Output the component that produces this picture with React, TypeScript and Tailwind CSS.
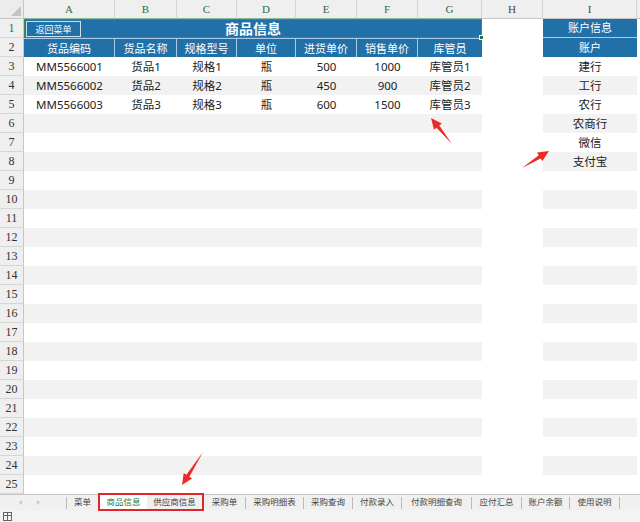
import React from "react";

const cols = ["A", "B", "C", "D", "E", "F", "G", "H", "I"];
const headers = ["货品编码", "货品名称", "规格型号", "单位", "进货单价", "销售单价", "库管员"];
const data = [
  ["MM5566001", "货品1", "规格1", "瓶", "500", "1000", "库管员1"],
  ["MM5566002", "货品2", "规格2", "瓶", "450", "900", "库管员2"],
  ["MM5566003", "货品3", "规格3", "瓶", "600", "1500", "库管员3"],
];
const accounts = ["建行", "工行", "农行", "农商行", "微信", "支付宝"];

function arrowPoints(tx: number, ty: number, hx: number, hy: number) {
  const dx = hx - tx;
  const dy = hy - ty;
  const len = Math.hypot(dx, dy);
  const ux = dx / len;
  const uy = dy / len;
  const px = -uy;
  const py = ux;
  const hl = 11;
  const hw = 5;
  const sw = 1.8;
  const bx = hx - ux * hl;
  const by = hy - uy * hl;
  const pts = [
    [tx, ty],
    [bx + px * sw, by + py * sw],
    [bx + px * hw, by + py * hw],
    [hx, hy],
    [bx - px * hw, by - py * hw],
    [bx - px * sw, by - py * sw],
  ];
  return pts.map((p) => p.map((v) => v.toFixed(1)).join(",")).join(" ");
}

const font = "font-['Noto_Sans','Noto_Sans_CJK_SC',sans-serif]";
const serif = "font-['Liberation_Serif','DejaVu_Serif',serif]";

function Sep() {
  return <div className="w-px h-[12px] bg-[#b9b9b9]" />;
}

function Tab({ label, w, active }: { label: string; w: number; active?: boolean }) {
  return (
    <div
      className={`flex items-center justify-center h-full text-[8.5px] ${
        active ? "bg-white text-[#1e7b45]" : "text-[#444]"
      }`}
      style={{ width: w }}
    >
      {label}
    </div>
  );
}

export default function App() {
  const rows = Array.from({ length: 25 }, (_, i) => i + 1);
  return (
    <div className={`relative w-[640px] h-[522px] overflow-hidden bg-white ${font}`}>
      <div className="grid grid-cols-[24px_91px_62px_60px_59px_61px_61px_64px_61px_94px_3px] grid-rows-[19px_repeat(25,19px)] h-[494px]">
        {/* corner */}
        <div className="bg-[#ececec] border-r border-b border-[#c6c6c6] relative">
          <svg className="absolute right-[2px] bottom-[2px]" width="10" height="10" viewBox="0 0 10 10">
            <polygon points="10,0 10,10 0,10" fill="#c4c4c4" />
          </svg>
        </div>
        {cols.map((c, i) => (
          <div
            key={c}
            className={`bg-[#efefef] border-r border-[#d4d4d4] flex items-center justify-center text-[11px] ${serif} ${
              i < 7 ? "text-[#2f6b3f] border-b border-b-[#8fb79a]" : "text-[#444] border-b border-b-[#c6c6c6]"
            }`}
          >
            {c}
          </div>
        ))}
        <div className="bg-[#efefef] border-b border-[#c6c6c6]" />

        {rows.map((r) => {
          const stripe = r >= 3 && r % 2 === 0 ? "bg-[#f2f2f2]" : "bg-white";
          const num = (
            <div
              key={`n${r}`}
              className={`bg-[#efefef] border-r border-b border-r-[#c6c6c6] border-b-[#d6d6d6] flex items-center justify-center text-[12px] ${serif} ${
                r === 1 ? "text-[#2f6b3f]" : "text-[#333]"
              }`}
            >
              {r}
            </div>
          );
          if (r === 1) {
            return (
              <React.Fragment key={r}>
                {num}
                <div className="col-span-7 relative bg-[#2270a8] border border-[#3f8a55] flex items-center justify-center text-white text-[14px] font-bold leading-none">
                  <div className="absolute left-[1px] top-[1px] w-[55px] h-[16px] border border-[#c9e0f2] flex items-center justify-center text-[9px] font-normal text-white">
                    返回菜单
                  </div>
                  商品信息
                  <div className="absolute -right-[3px] -bottom-[3px] w-[5px] h-[5px] bg-[#217346] border border-white" />
                </div>
                <div className="bg-white" />
                <div className="bg-[#2270a8] border-b border-[#a8cbe8] flex items-center justify-center text-white text-[11px]">
                  账户信息
                </div>
                <div className="bg-white" />
              </React.Fragment>
            );
          }
          if (r === 2) {
            return (
              <React.Fragment key={r}>
                {num}
                {headers.map((h, i) => (
                  <div
                    key={h}
                    className={`bg-[#2270a8] border-t border-[#a8cbe8] flex items-center justify-center text-white text-[11px] leading-none ${
                      i < 6 ? "border-r" : ""
                    }`}
                  >
                    {h}
                  </div>
                ))}
                <div className="bg-white" />
                <div className="bg-[#2270a8] flex items-center justify-center text-white text-[11px] leading-none">
                  账户
                </div>
                <div className="bg-white" />
              </React.Fragment>
            );
          }
          const d = data[r - 3];
          const acc = accounts[r - 3];
          return (
            <React.Fragment key={r}>
              {num}
              {Array.from({ length: 7 }, (_, i) => (
                <div
                  key={i}
                  className={`${stripe} flex items-center justify-center text-[11.5px] text-[#222] leading-none`}
                >
                  {d ? d[i] : ""}
                </div>
              ))}
              <div className="bg-white" />
              <div className={`${stripe} flex items-center justify-center text-[11.5px] text-[#222] leading-none`}>
                {acc ?? ""}
              </div>
              <div className="bg-white" />
            </React.Fragment>
          );
        })}
      </div>

      {/* sheet tabs */}
      <div className="flex items-center h-[16px] bg-[#f0f0f0] border-t border-[#c6c6c6]">
        <div className="w-[66px] h-full flex items-center">
          <svg width="66" height="15" viewBox="0 0 66 15">
            <polygon points="22,5 22,10 19,7.5" fill="#c8c8c8" />
            <polygon points="37,5 37,10 40,7.5" fill="#c8c8c8" />
          </svg>
        </div>
        <Sep />
        <Tab label="菜单" w={31} />
        <div className="flex h-[18px] border-2 border-[#e0262a] -mt-px">
          <Tab label="商品信息" w={47} active />
          <Tab label="供应商信息" w={55} />
        </div>
        <Tab label="采购单" w={41} />
        <Sep />
        <Tab label="采购明细表" w={57} />
        <Sep />
        <Tab label="采购查询" w={48} />
        <Sep />
        <Tab label="付款录入" w={48} />
        <Sep />
        <Tab label="付款明细查询" w={69} />
        <Sep />
        <Tab label="应付汇总" w={49} />
        <Sep />
        <Tab label="账户余额" w={47} />
        <Sep />
        <Tab label="使用说明" w={49} />
        <Sep />
      </div>

      {/* status bar */}
      <div className="h-[12px] bg-[#f3f3f3] flex items-center pl-[3px]">
        <svg width="9" height="9" viewBox="0 0 9 9">
          <rect x="0.5" y="0.5" width="8" height="8" fill="none" stroke="#666" strokeWidth="1" />
          <line x1="0.5" y1="3.5" x2="8.5" y2="3.5" stroke="#666" />
          <line x1="4.5" y1="0.5" x2="4.5" y2="8.5" stroke="#666" />
        </svg>
      </div>

      {/* red arrows */}
      <svg className="absolute inset-0 pointer-events-none" width="640" height="522" viewBox="0 0 640 522">
        <polygon points={arrowPoints(452, 144, 431, 118)} fill="#ec2b27" />
        <polygon points={arrowPoints(522, 168, 549, 151)} fill="#ec2b27" />
        <polygon points={arrowPoints(203, 452, 182, 485)} fill="#ec2b27" />
      </svg>
    </div>
  );
}
